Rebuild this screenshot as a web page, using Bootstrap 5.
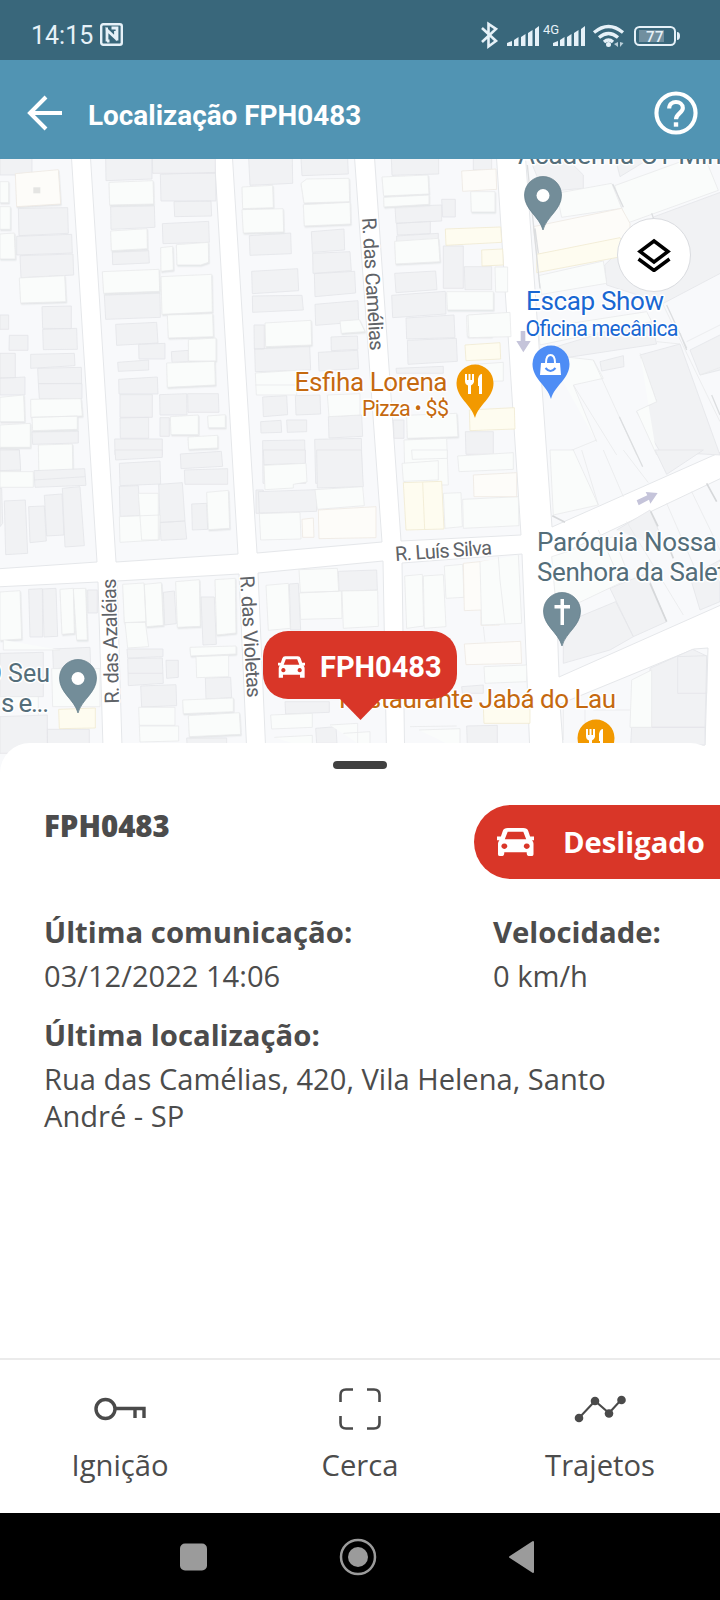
<!DOCTYPE html>
<html lang="pt-BR">
<head>
<meta charset="utf-8">
<meta name="viewport" content="width=device-width, initial-scale=1">
<title>Localização FPH0483</title>
<link href="https://cdn.jsdelivr.net/npm/bootstrap@5.3.0/dist/css/bootstrap.min.css" rel="stylesheet">
<style>
  body { font-family: "Open Sans", "Noto Sans", sans-serif; color: #4c4c4c; background: #fff; }
  svg { display: block; flex: none; }
  .phone { width: 720px; height: 1600px; }
  .status { height: 60px; background: #39677b; color: #e6f1f8; padding: 11px 40px 0 31px; font: 25px Roboto, sans-serif; }
  .topbar { height: 99px; background: #5194b3; color: #fff; padding: 7px 22px 0 27px; }
  .topbar h1 { font: 700 27.9px/1 Roboto, sans-serif; padding-top: 5px; }
  .map { height: 614px; }
  .map text { font-family: Roboto, sans-serif; paint-order: stroke; stroke: #fff; stroke-width: 3px; stroke-linejoin: round; }
  .block { fill: #f8f9fb; stroke: #e5e7ea; stroke-width: 1; }
  .gray { fill: #f1f2f4; stroke: #e4e6e9; stroke-width: 2.5; }
  .pale { fill: #fafcfb; stroke: #e9ebec; stroke-width: 2.5; }
  .raised { filter: drop-shadow(2px 4px 0 #e5e7e9); }
  .cream { fill: #fefcf0; stroke: #f1ead2; stroke-width: 2.5; }
  .ivory { fill: #fdfcf9; stroke: #eee9e3; stroke-width: 2.5; }
  .street { fill: #5f6368; font-size: 20px; }
  .food { fill: #c5690f; }
  .place { fill: #546e7a; }
  .shop { fill: #1967d2; }
  .layers { right: 29px; top: 59px; width: 74px; height: 74px; border: 1px solid #dadce0; }
  .tag { left: 263px; top: 472px; width: 194px; height: 68px; border-radius: 25px; background: #d93628; color: #fff; font: 700 29px/1 Roboto, sans-serif; padding: 4px 0 0 15px; }
  .tag-tip { left: 339px; top: 539px; width: 43px; height: 22px; background: #d93628; clip-path: polygon(0 0,100% 0,50% 100%); }
  .sheet { margin-top: -30px; height: 615px; border-radius: 30px 30px 0 0; background: #fff; position: relative; padding: 18px 0 0 44px; }
  .handle { width: 54px; height: 8px; border-radius: 4px; background: #404040; margin-left: 289px; }
  .plate { font-size: 29.4px; font-weight: 800; line-height: 38px; margin-top: 2px; }
  .state { width: 246px; height: 74px; border-radius: 37px 0 0 37px; background: #d93628; color: #fff; font-size: 29.2px; font-weight: 700; padding: 2px 0 0 23px; }
  .info { font-size: 29.1px; line-height: 37px; }
  .info b { display: block; font-size: 29.3px; font-weight: 700; margin-bottom: 7px; }
  .tabs { height: 155px; border-top: 2px solid #ebebeb; font-size: 29.200px; line-height: 40px; }
  .tabs svg { margin-top: 26px; margin-bottom: 13px; }
  .sysbar { height: 87px; background: #000; padding-left: 180px; }
</style>
</head>
<body>
<div class="phone d-flex flex-column overflow-hidden">
  <header class="status d-flex align-items-center">
    <span>14:15</span>
    <svg style="margin-left:7px;margin-top:-2px" width="23" height="23" viewBox="0 0 23 23" fill="none" stroke="#e6f1f8"><rect x="1.200" y="1.200" width="20.600" height="20.600" rx="2" stroke-width="2.400"/><path d="M7 18.500V7l8.500 8V8M5.500 6H8M11.500 5H17v12.500M7 18h2.500" stroke-width="2.800"/></svg>
    <svg class="ms-auto" width="200" height="32" viewBox="480 19 200 32" fill="#e6f1f8">
      <path d="M482 27l14 13-7.500 5.500V23l7.500 5-14 13" fill="none" stroke="#e6f1f8" stroke-width="2.600"/>
      <path d="M507 45v-3l5-2v5zM514 45v-6l4.500-3v9zM521 45v-9l4.500-3v12zM528 45V32l4.500-3v16zM535 45V28l4-3v20z"/>
      <path d="M553 45v-3l5-2v5zM560 45v-6l4.500-3v9zM567 45v-9l4.500-3v12zM574 45V32l4.500-3v16zM581 45V28l4-3v20z"/>
      <text x="543" y="32.500" font-size="13" textLength="16">4G</text>
      <g fill="none" stroke="#e6f1f8" stroke-width="3.300"><path d="M594 31.500q14.500-12 29 0M599 36.500q9.500-8 19 0M604 41q4.500-4 9 0"/></g>
      <circle cx="608.500" cy="43.500" r="2.500"/><path d="M618 41v5l-4-3zM620 41v5l3.500-4z" opacity=".75"/>
      <rect x="635" y="26" width="40" height="18" rx="4.500" fill="none" stroke="#e6f1f8" stroke-width="2"/>
      <rect x="639" y="29" width="25" height="12" fill="#718f9f"/><path d="M677 31q3 0 3 4t-3 4z"/>
      <text x="646" y="40.500" font-size="15" font-weight="500" textLength="17.500">77</text>
    </svg>
  </header>

  <nav class="topbar d-flex align-items-center">
    <svg width="36" height="36" viewBox="0 0 36 36" fill="none" stroke="#fff" stroke-width="4"><path d="M35 18H4M19 2L3 18l16 16"/></svg>
    <h1 class="mb-0" style="margin-left:25px">Localização FPH0483</h1>
    <svg class="ms-auto" width="44" height="44" viewBox="0 0 45 45" fill="none" stroke="#fff" stroke-width="4.200"><circle cx="22.500" cy="22.500" r="20"/><path d="M15.500 18c0-9.500 14-8.500 14-.5 0 5-7 5.500-7 11.500"/><path d="M22.500 32v4.500" stroke-width="4.500"/></svg>
  </nav>

  <main class="map position-relative flex-shrink-0 overflow-hidden bg-white">
    <svg width="720" height="614" viewBox="0 159 720 614">
      <!-- city blocks -->
      <g class="block">
        <path d="M-5 150H71L97 562-5 569zM90 150H214L238 554 116 562zM232 150H354L382 542 257 553zM374 150H496L521 535 401 541zM525 150H730V448L552 527z"/>
        <path d="M-5 587L98 582 104 780H-5zM117 581L239 574 248 780H123zM258 573L383 561 387 780H267zM402 563L522 554 531 780H405zM555 557L730 474V601L559 677zM560 704L694 649 708 648 705 745H563z"/>
      </g>
      <!-- north-west quarter -->
      <g transform="translate(0 155) scale(.33333)">
        <path class="gray" d="M0 10H96V60H0zM55 160L203 158 205 235 57 242zM50 244L215 238 217 294 50 300zM60 302L219 297 221 360 63 368zM126 455L214 453V521L128 520zM128 523L230 520 232 583 130 584zM28 541H84V586H27zM0 480H26V523H0zM0 595H46V668H0zM0 670L75 666V720H0zM92 598L223 595 225 632 92 640zM113 640L244 637 245 685 115 686zM115 686H246V731H118zM96 830L235 828V864L98 868zM0 880L58 884 62 960H0zM317 10H456V72L318 77zM457 10H646V55H458zM481 58L646 52 648 138H483zM522 140L633 138 635 183 524 185zM332 155L463 152 465 217 333 223zM487 206L626 199 628 262 489 266zM337 291L446 287 448 324 338 329zM313 420L480 414 481 487 317 493zM347 508L470 502 474 564 350 571zM416 568L495 565V612H417zM353 622L446 615V645L355 649zM356 673L472 666 474 717H357zM360 719H457V787H360zM479 719L560 716 561 780H480zM563 716H655L657 772H564zM360 789L446 787V850H361zM480 788H508V844H480zM344 852H487V900H345zM514 590L565 586V620L516 622z"/>
        <g class="pale raised"><path d="M0 80H26V143H0zM0 155H31V223H0zM0 237L43 234 46 312H0zM58 369L194 362 198 440 62 444zM92 733L243 731 247 783 93 787zM96 787L232 783V823L98 827zM0 727L71 720 74 800H0zM0 810L91 805V877H0zM115 870L217 867 219 968H117zM327 82L459 77 461 147 329 150zM332 228L441 221 442 281 334 287zM307 350L477 343 479 409 311 415zM529 269L625 262 626 322 602 330H531zM482 278L518 274 520 345 483 349zM483 365L635 358 637 471 486 478zM502 480L638 476 640 545 505 549zM565 554L648 549V618H566zM500 624L644 619 646 690 502 697zM511 785L595 780V839H513zM623 783L676 779V818H625zM564 846L653 841V879L566 883z"/></g>
        <path class="ivory raised" d="M46 56L175 44 182 147 50 155z"/><path d="M100 97h21v18h-21z" fill="#e5e5e3"/>
      </g>
      <!-- north-centre quarter -->
      <g transform="translate(230 155) scale(.33333)">
        <path class="gray" d="M56 10H187L188 85 60 91zM213 10H353L355 57 216 62zM58 242L182 234 184 296 60 301zM65 349L203 341 206 407 67 416zM67 423L216 421 220 465 68 472zM244 230L342 222 344 285 247 292zM248 295L360 290 364 347 249 355zM253 356L374 349 377 414 255 425zM255 448L384 437 386 501 257 511zM72 510H103V582H73zM74 582L239 573 242 645 76 650zM303 546L382 543 384 583 304 587zM265 592L383 586 386 641 267 648zM98 726L170 722 173 779 100 785zM196 722L270 720 272 777 198 780zM92 800L153 796 155 832 93 834zM170 795H230V830L172 832zM295 785L395 780 398 844 297 849zM98 857L224 855 227 985 99 985zM254 853L394 850 397 985H257zM484 10H626V57L486 61zM635 133H676V186H638zM495 155L635 150V198L498 205zM500 205L601 199V236L502 240zM500 243L625 235V270H500zM494 355L617 348 621 404 498 413zM485 421L646 409 648 477 488 488zM528 489L672 480 675 548 530 552zM532 556L679 550 682 619 534 628zM640 273H700V400H640zM703 335H785V404H705zM730 10H785V45H730zM498 640L640 634V655H500zM490 795H522V850H492zM706 830H790V898H708z"/>
        <g class="pale raised"><path d="M36 96L128 91 130 158 38 161zM36 164L159 161 161 231 40 234zM213 85L230 72 357 70 359 140 222 144zM220 149L360 142 362 207 223 213zM105 504L243 496 245 570 107 575zM330 498L388 494 405 530 334 535zM456 66L594 60 597 117 461 123zM461 127L597 120V148L462 156zM494 259L625 250 630 320 497 327zM650 410H790V465H652zM530 781L680 775 684 845 532 850zM722 110H795V171H724zM710 482L785 475V545H712z"/></g>
        <path class="pale" d="M76 654L200 646V720H79zM292 720L390 716V780L297 785zM522 855L650 850 655 990H525zM76 690H200"/>
        <path class="ivory" d="M695 48L798 42 800 103 698 109z"/>
        <path class="cream" d="M646 222L812 216 815 262 648 271zM755 285L818 282 820 330 756 333zM705 570L810 563 812 612 708 617zM718 765L853 758 855 822 720 827z"/>
      </g>
      <!-- north-east quarter -->
      <g transform="translate(460 155) scale(.33333)">
        <path class="gray" d="M583 185L800 105V345L610 445 440 390 434 330zM240 590L570 490 590 567 240 620zM540 600L660 567 780 900 600 890 530 770 590 740zM690 585L800 530V640L720 660zM466 10H570L480 65zM420 620L490 602 492 635 425 648zM215 25L330 20 370 60V100L250 110z"/>
        <path class="pale" d="M290 115L455 85 485 160 305 187zM464 92L690 10 740 20 775 106 500 205zM235 362L430 318 440 385 245 418zM235 520L560 470 575 500 240 570zM340 690L470 900M400 615L530 900M540 595L590 740 530 768 590 900M600 430L780 800M720 660L800 630M265 600L400 615 430 670 340 690 410 860M300 900L410 855M680 560L800 500M590 560L660 567M24 480L150 472 153 545 27 548zM105 336H143V411H107zM45 628L130 622V678L48 680z"/>
        <path class="ivory" d="M220 215L485 160 510 205V255L230 298z"/>
        <path class="cream" d="M230 298L480 248 510 300 230 353z"/>
        <path d="M202 30l38 370M225 220l10 75M458 87l32 70M575 175l18 50M620 450l60 130M660 535l20 50M755 720l25 60M478 785l70 150" stroke="#dcdee0" stroke-width="4" fill="none"/>
        <path d="M182 528h14v30h16l-22 34-21-34h13z" fill="#c5c4da"/>
      </g>
      <!-- south-west quarter -->
      <g transform="translate(0 450) scale(.33333)">
        <path class="gray" d="M0 0H58L62 60 0 62zM102 62L254 56 258 106 105 112zM102 90L256 80M0 115H5L8 220 0 230zM13 153L76 150 83 310 17 314zM86 170L133 168 139 273 90 278zM133 136L186 132 192 255 140 258zM187 115L240 110 253 287 195 291zM358 40L480 33 482 102 360 107zM358 109L415 107 420 197 360 199zM476 103L547 98 555 213 480 217zM480 218L555 213 560 267 483 271zM541 12L664 4 668 49 543 56zM553 60L683 56V103H555zM345 0H487V22L347 30zM575 162L620 160 623 238 577 240zM86 418L127 416 128 561H90zM128 417L168 415 173 559 132 561zM263 420H292V489H264zM158 597L270 592 272 650 160 656zM0 610L130 607V740H0zM0 800L142 795V910H0zM142 838H268V900H143zM381 597H489V620L383 624zM383 626L487 624 490 700 385 707zM385 670H488M490 427L523 423 529 521 494 525zM603 441H643L649 583 609 585zM498 631H535V682L500 685zM422 708L528 704 530 767 425 771zM616 684L692 682 695 743 618 747zM560 864H680V900H562zM768 120H790V190H768z"/>
        <g class="pale raised"><path d="M0 426L60 422 65 567 0 571zM180 418L220 415 223 550 186 553zM220 416L257 415 262 570H230zM368 403L432 399 438 515 373 518zM433 403L484 398 490 526 439 530zM527 395L598 389 601 529 532 532zM620 127L685 121 689 235 625 239zM645 389L706 385 708 549 650 555zM570 592L708 588V612L572 618zM548 750L700 744V785L550 791zM565 797L718 788 722 853 568 860z"/></g>
        <path class="pale" d="M10 570V600H180M375 518L436 517 446 590 383 594zM588 620L686 616V680L590 683zM358 200L480 195 478 270 360 277zM415 130H475V270H425zM155 656H300V770H158zM416 772H525V826H418zM418 828H536V873L420 876zM0 740H115V795M0 65H100V112H0z"/>
        <path class="cream" d="M176 778L286 774V834L178 836z"/>
      </g>
      <!-- south-centre quarter -->
      <g transform="translate(230 450) scale(.33333)">
        <path class="gray" d="M100 0H226V40L102 44zM260 0H394L400 110 262 114zM85 125L260 119V184L88 189zM325 364L440 360 442 420 327 424zM178 402L205 400 212 540H182zM165 755H298V787L167 792zM257 835L318 830 321 880H260z"/>
        <path class="pale" d="M102 46L228 40 231 96 190 103V114L105 119zM255 119L398 110 403 167 262 178zM88 191L210 187 213 267 92 270zM207 359L322 355 326 424 211 427zM108 406L175 400 181 535 115 541zM208 429L334 423 336 505 212 508zM336 423L443 421 445 529 340 535zM122 795L247 790V832L125 837zM133 862L247 856V900M340 850L420 845V900M516 40L625 32V90L520 94zM545 0H652V25L547 28zM683 18L850 8V58L687 65zM640 130L693 128 697 230 645 235zM698 148L865 140 867 227 700 235zM524 378L577 373 581 528 530 535zM580 378L640 374 648 530 583 535zM643 348L698 343 702 442 648 445zM540 830L680 828M567 840L690 836V900M300 825L383 820V880"/>
        <path class="cream" d="M520 98L635 94 642 237 528 240zM578 97L584 238M760 770L900 763V820H762z"/>
        <path class="ivory" d="M265 180L438 170V263L267 266zM216 208L250 204 252 262H218zM700 340L798 330 808 525 753 526V480L703 482zM730 75L860 68V140H732zM703 582L872 574 875 640 708 644z"/>
        <path class="gray" d="M710 828L802 826V890H712zM695 710L760 705V730H697z"/>
      </g>
      <!-- south-east quarter -->
      <g transform="translate(460 450) scale(.33333)">
        <path class="gray" d="M450 415L560 370 620 515 520 560zM310 520L467 455 520 560 450 600 310 640zM570 655L698 598 740 618 735 832H575zM653 620L740 617V730H653zM515 832H735V885H512zM585 0H730L620 73zM470 240L570 180 620 300M690 380L780 330V455L720 480z"/>
        <path class="pale" d="M270 0L280 195 415 165 340 0zM365 0L415 165M430 0L490 140M490 0L565 98M415 240L480 390M500 215L670 495M620 160L720 390M695 125L780 300M275 320L460 260 510 385 290 490zM515 690L575 660V832H510zM375 760V870M310 770V870M400 780H510M115 320L120 390 135 520M60 335L65 525 185 520 175 315M72 650L200 645V695L75 700zM70 530L75 575"/>
        <path d="M277 197l38 20M572 184l22 45M630 300l10 25M570 400l50 115M740 100l30 55" stroke="#d6d8da" stroke-width="5" fill="none"/>
        <path d="M530 151l32-15-5-10 36 3-22 32-4-12-31 17z" fill="#c5c4da"/>
      </g>

      <!-- street names -->
      <text class="street" transform="translate(362 218) rotate(86.500)" textLength="133">R. das Camélias</text>
      <text class="street" transform="translate(240 576) rotate(86.500)" textLength="122">R. das Violetas</text>
      <text class="street" transform="translate(119 703.500) rotate(-91.500)" textLength="125">R. das Azaléias</text>
      <text class="street" transform="translate(395.500 561) rotate(-4)" textLength="97">R. Luís Silva</text>

      <!-- places -->
      <g font-size="26">
        <text class="place" x="518" y="164" textLength="212">Academia CT Mim</text>
        <text class="shop" x="526" y="309.500" textLength="138">Escap Show</text>
        <text class="shop" x="525.500" y="335.500" font-size="21.500" textLength="153">Oficina mecânica</text>
        <text class="food" x="294.500" y="390.500" textLength="153">Esfiha Lorena</text>
        <text class="food" x="362" y="416" font-size="21.500" textLength="87">Pizza • $$</text>
        <text class="place" x="537" y="550.500" textLength="180">Paróquia Nossa</text>
        <text class="place" x="537" y="580.500" textLength="189">Senhora da Salet</text>
        <text class="place" x="50" y="682" font-size="25" text-anchor="end">O Seu</text>
        <text class="place" x="1" y="712" textLength="48">s e...</text>
        <text class="food" x="339" y="707.500" textLength="277">Restaurante Jabá do Lau</text>
      </g>

      <defs><path id="pin" d="M0 53C-4 39-18.500 33-18.500 18A18.500 18.500 0 0 1 18.500 18C18.500 33 4 39 0 53z"/></defs>
      <g fill="#738d99" stroke="#5f7a86" stroke-width=".7"><use href="#pin" x="543" y="177"/><use href="#pin" x="78" y="660"/><use href="#pin" x="562" y="593"/></g>
      <use href="#pin" x="551" y="346" fill="#4e8df5"/>
      <g fill="#f29900"><use href="#pin" x="475" y="365"/><use href="#pin" x="596" y="720"/></g>
      <g fill="#fff">
        <circle cx="543" cy="195.500" r="6.500"/><circle cx="78" cy="678.500" r="6.500"/>
        <path d="M560.500 599h3.500v6h6v3.500h-6V625h-3.500v-16.500h-6V605h6z"/>
        <path d="M541 363h19l1 12h-21z"/>
        <g id="fork"><path d="M465 374h2v6h1.500v-6h2v6H472v-6h2v8q-1 3-3 3.500V394h-3v-8.500q-3-1-3-4.500zM478 386v-7q1-5 4-5v20h-3v-8z"/></g>
        <use href="#fork" x="121" y="355"/>
      </g>
      <path d="M546 363q0-8 4.500-8t4.500 8" fill="none" stroke="#fff" stroke-width="2"/><path d="M545.500 368q5 6 10 0" fill="none" stroke="#4e8df5" stroke-width="2"/>
    </svg>

    <button class="layers btn position-absolute rounded-circle bg-white p-0 d-flex align-items-center justify-content-center" aria-label="Camadas">
      <svg width="34" height="34" viewBox="0 0 34 34" fill="none" stroke="#000" stroke-width="3.500"><path d="M17 3L31 13.500 17 24 3 13.500zM1.500 21L17 32.500 32.500 21"/></svg>
    </button>
    <div class="tag-tip position-absolute"></div>
    <div class="tag position-absolute d-flex align-items-center">
      <svg width="27" height="22" viewBox="0 0 38 30" fill="#fff"><path fill-rule="evenodd" d="M10 0h18q3 0 4 3l2 6h4v4h-2q1.500 2 1.500 4v13H31v-4H7v4H1V17q0-2 1.500-4H0V9h4l2-6q1-3 4-3zM11 4L8 12h22l-3-8zM7.500 16.500a3 3 0 1 0 .1 0zM30.500 16.500a3 3 0 1 0 .1 0z"/></svg>
      <span style="margin-left:15px">FPH0483</span>
    </div>
  </main>

  <section class="sheet flex-shrink-0">
    <div class="handle"></div>
    <div class="d-flex justify-content-between" style="margin-top:36px">
      <div class="plate">FPH0483</div>
      <div class="state d-flex align-items-center">
        <svg style="margin-top:-3px" width="37" height="28" viewBox="0 0 38 30" preserveAspectRatio="none" fill="#fff"><path fill-rule="evenodd" d="M11 0h16q4 0 5 3l2 6h4v4h-2q1.500 2 1.500 4v11q0 2-2 2h-3q-2 0-2-4h-23q0 4-2 4H3q-2 0-2-2V17q0-2 1.500-4H0V9h4l2-6q1-3 5-3zM11 4L8 12h22l-3-8zM7.500 16.500a3 3 0 1 0 .1 0zM30.500 16.500a3 3 0 1 0 .1 0z"/></svg>
        <span style="margin-left:29px">Desligado</span>
      </div>
    </div>
    <div class="info d-flex" style="margin-top:35px">
      <div style="width:449px"><b>Última comunicação:</b>03/12/2022 14:06</div>
      <div><b>Velocidade:</b>0 km/h</div>
    </div>
    <div class="info" style="margin-top:22px"><b>Última localização:</b>Rua das Camélias, 420, Vila Helena, Santo<br>André - SP</div>
  </section>

  <nav class="tabs row row-cols-3 g-0 text-center flex-shrink-0">
    <div class="col d-flex flex-column align-items-center">
      <svg width="54" height="46" viewBox="0 0 54 46" fill="none" stroke="#4a4a4a" stroke-width="3.400"><circle cx="12.500" cy="23" r="9.500"/><path d="M22 22.500H51V32M42 22.500V32"/></svg>Ignição</div>
    <div class="col d-flex flex-column align-items-center">
      <svg width="46" height="46" viewBox="0 0 46 46" fill="none" stroke="#4a4a4a" stroke-width="2.600"><path d="M3.500 16V9q0-5.500 5.500-5.500h7M30 3.500h7q5.500 0 5.500 5.500v7M42.500 30v7q0 5.500-5.500 5.500h-7M16 42.500H9q-5.500 0-5.500-5.500v-7"/></svg>Cerca</div>
    <div class="col d-flex flex-column align-items-center">
      <svg width="54" height="46" viewBox="0 0 54 46" fill="#4a4a4a"><path d="M6 32L22 15 36 27 48 14" fill="none" stroke="#4a4a4a" stroke-width="2"/><circle cx="6" cy="32" r="4.300"/><circle cx="22" cy="15" r="4.300"/><circle cx="36" cy="27.500" r="4.300"/><circle cx="48.500" cy="14" r="4.300"/></svg>Trajetos</div>
  </nav>

  <footer class="sysbar d-flex align-items-center flex-shrink-0">
    <svg width="360" height="40" viewBox="180 1537 360 40" fill="#9b9b9b"><rect x="180" y="1543.500" width="27" height="27" rx="5"/><circle cx="358" cy="1557" r="10"/><circle cx="358" cy="1557" r="17" fill="none" stroke="#9b9b9b" stroke-width="2.500"/><path d="M510 1557l23-15v30z" stroke="#9b9b9b" stroke-width="2" stroke-linejoin="round"/></svg>
  </footer>
</div>
<script src="https://cdn.jsdelivr.net/npm/bootstrap@5.3.0/dist/js/bootstrap.bundle.min.js"></script>
</body>
</html>
